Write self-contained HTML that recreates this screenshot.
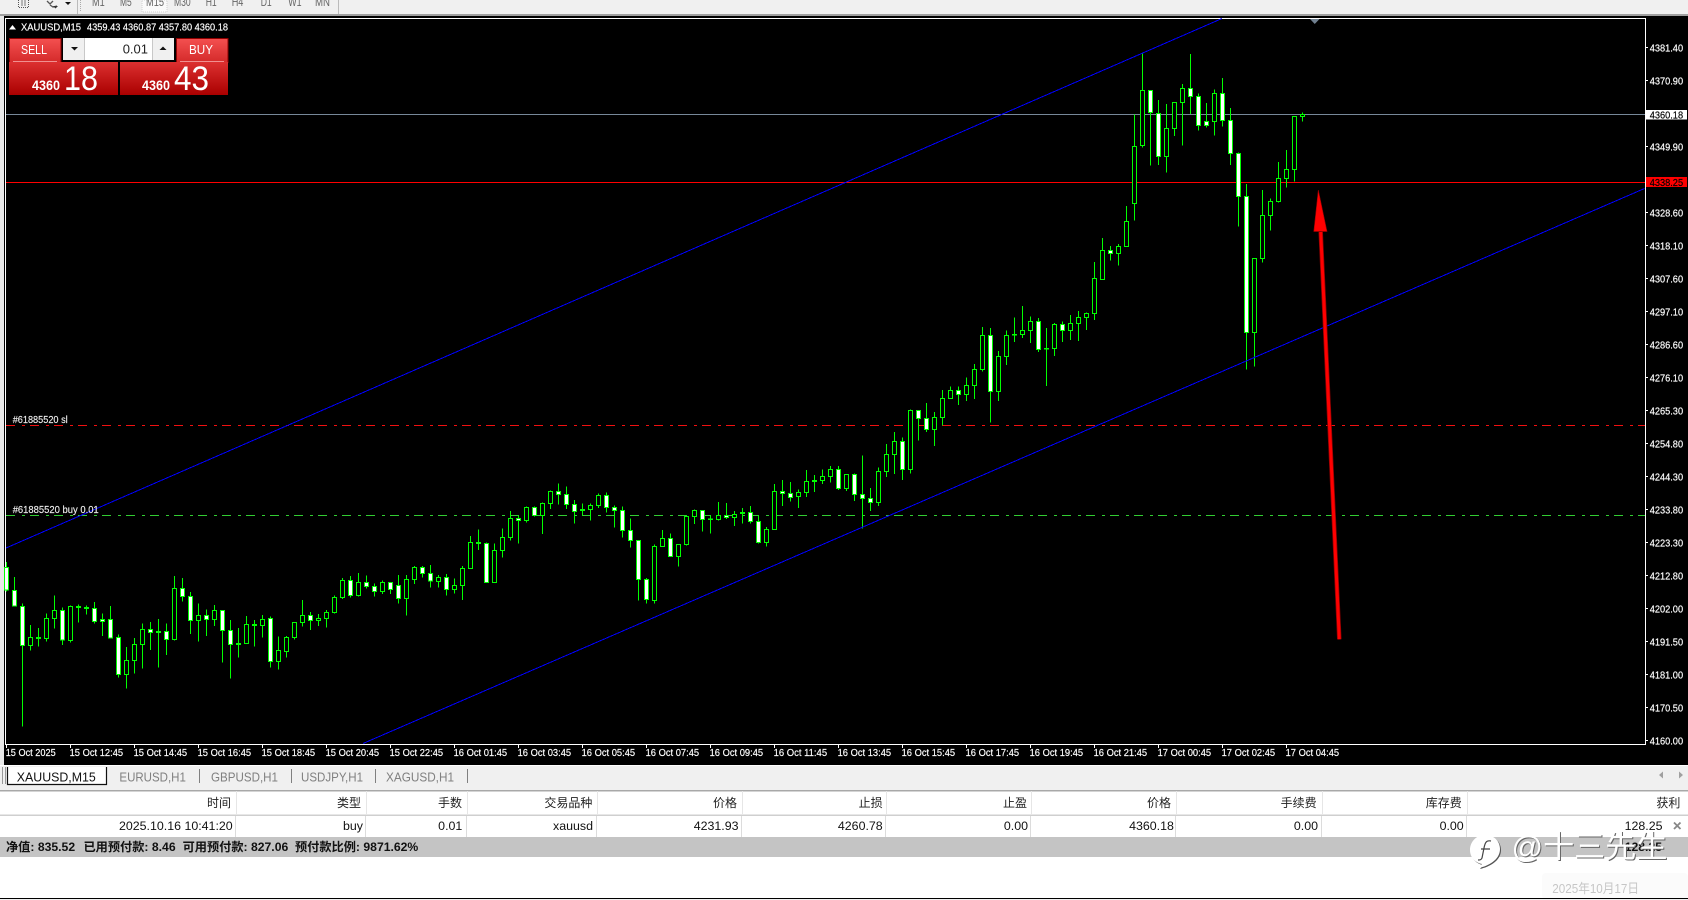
<!DOCTYPE html>
<html><head><meta charset="utf-8"><title>XAUUSD,M15</title>
<style>
html,body{margin:0;padding:0;background:#f0f0f0;width:1688px;height:900px;overflow:hidden}
svg{display:block;position:absolute;left:0;top:0}
text{font-family:"Liberation Sans","Noto Sans CJK SC",sans-serif;white-space:pre}
.p text{font-size:10.5px;fill:#fff;stroke:#fff;stroke-width:.18px}
.p text.k{fill:#000;stroke:#000}
.h text{font-size:12px;fill:#222;text-anchor:end}
.r text{font-size:12.4px;fill:#111;text-anchor:end}
.b text{font-size:12.2px;font-weight:bold;fill:#111}
.m text{font-size:12px;fill:#666}
.w{fill:none;stroke:#0f0;stroke-width:3}
.bw{fill:#fff;stroke:#0f0;stroke-width:3}
.bb{fill:#000;stroke:#0f0;stroke-width:3}
</style></head><body>
<svg width="1688" height="900" viewBox="0 0 1688 900" xmlns="http://www.w3.org/2000/svg">
<defs>
<linearGradient id="gs" x1="0" y1="0" x2="0" y2="1"><stop offset="0" stop-color="#f45050"/><stop offset="1" stop-color="#d42a2a"/></linearGradient>
<linearGradient id="gl" x1="0" y1="0" x2="0" y2="1"><stop offset="0" stop-color="#dc3030"/><stop offset="1" stop-color="#aa0000"/></linearGradient>
</defs>
<!-- toolbar -->
<rect width="1688" height="14" fill="#f0f0f0"/>
<rect y="14" width="1688" height="2" fill="#a0a0a0"/>
<rect y="16" width="4" height="750" fill="#e8e8e8"/>
<rect x="142" y="0" width="25" height="12" fill="#fafafa" stroke="#cfcfcf" stroke-dasharray="1 1"/>
<g fill="none" stroke="#555">
<path d="M18.5 0V7.5H28.5V0" stroke-dasharray="1 1"/><path d="M22 0V6M25 0V6" stroke="#777"/>
<path d="M47 1l3 3 3-3M50 5l3 2 4-1" stroke-width="1.3"/>
<path d="M77.5 0V14M338.5 0V14" stroke="#bbb"/><path d="M80.5 0V12" stroke="#aaa" stroke-dasharray="1 1"/>
</g>
<path d="M65 2h6l-3 3z" fill="#111"/><path d="M53 6h5l-2.500 2.500z" fill="#333"/>
<g class="m">
<text x="92" y="6" textLength="12.700" lengthAdjust="spacingAndGlyphs">M1</text>
<text x="120" y="6" textLength="11.700" lengthAdjust="spacingAndGlyphs">M5</text>
<text x="146" y="6" textLength="18" lengthAdjust="spacingAndGlyphs">M15</text>
<text x="174" y="6" textLength="16.700" lengthAdjust="spacingAndGlyphs">M30</text>
<text x="205.700" y="6" textLength="11" lengthAdjust="spacingAndGlyphs">H1</text>
<text x="231.700" y="6" textLength="11.700" lengthAdjust="spacingAndGlyphs">H4</text>
<text x="260.700" y="6" textLength="11" lengthAdjust="spacingAndGlyphs">D1</text>
<text x="288.300" y="6" textLength="13.300" lengthAdjust="spacingAndGlyphs">W1</text>
<text x="315" y="6" textLength="15" lengthAdjust="spacingAndGlyphs">MN</text>
</g>
<!-- chart bg -->
<rect x="4" y="16" width="1684" height="749" fill="#000"/>
<path d="M5.500 744V18.500H1645.500V744" fill="none" stroke="#fff"/>
<path d="M5 744.500H1646" stroke="#fff"/>
<rect x="0" y="765" width="1688" height="1" fill="#fff"/>
<!-- levels -->
<g shape-rendering="crispEdges">
<path d="M6 114.500H1645" stroke="#778899"/>
<path d="M6 182.500H1645" stroke="#f00"/>
<path d="M6 425.500H1645" stroke="#f01010" stroke-dasharray="9 7 3 5"/>
<path d="M6 515.500H1645" stroke="#32cd32" stroke-dasharray="9 7 3 5"/>
</g>
<!-- candles -->
<g shape-rendering="crispEdges">
<g transform="translate(0,400) scale(.33333)">
<path class="w" d="M19.5 486V575M43.5 531V620M67.5 610V980M91.5 675V752M115.5 684V740M139.5 640V725M163.5 586V686M187.5 622V735M211.5 617V728M235.5 613V668M259.5 616V644M283.5 606V670M307.5 640V708M331.5 618V716M355.5 703V833M379.5 741V866M403.5 714V821M427.5 670V806M451.5 666V750M475.5 657V803M499.5 670V765M523.5 528V722M547.5 534V605M571.5 576V702M595.5 610V725M619.5 628V708M643.5 615V678M667.5 632V788M691.5 660V836M715.5 684V773M739.5 648V731M763.5 660V740M787.5 645V713M811.5 650V803M835.5 709V809M859.5 708V773M883.5 667V718M907.5 600V680M931.5 636V690M955.5 642V678M979.5 630V683M1003.5 586V640M1027.5 534V597M1051.5 528V592M1075.5 519V590M1099.5 526V566M1123.5 550V590M1147.5 541V582M1171.5 547V582M1195.5 525V611M1219.5 525V647M1243.5 498V552M1267.5 498V533M1291.5 495V563M1315.5 525V563M1339.5 522V587M1363.5 535V581M1387.5 498V600M1411.5 408V506M1435.5 388V450M1459.5 427V548M1483.5 430V548M1507.5 385V473M1531.5 333V422M1555.5 346V431M1579.5 319V368M1603.5 320V350M1627.5 307V402M1651.5 271V327M1675.5 250V314M1699.5 259V327M1723.5 300V371M1747.5 310V347M1771.5 310V362M1795.5 280V324M1819.5 277V338M1843.5 316V383M1867.5 319V413M1891.5 355V443M1915.5 422V602M1939.5 534V611M1963.5 433V611M1987.5 390V441M2011.5 400V470M2035.5 434V500M2059.5 347V437M2083.5 328V372M2107.5 330V395M2131.5 347V401M2155.5 306V362M2179.5 309V357M2203.5 333V378M2227.5 324V371M2251.5 318V371M2275.5 347V430M2299.5 381V440M2323.5 252V389M2347.5 240V318M2371.5 246V305M2395.5 268V324M2419.5 210V291M2443.5 225V276M2467.5 208V252M2491.5 198V248M2515.5 198V270M2539.5 223V273M2563.5 220V303M2587.5 166V386M2611.5 264V333M2635.5 202V318M2659.5 132V231M2683.5 96V222M2707.5 112V240M2731.5 28V221"/>
<path class="bb" d="M85.5 712h12V736h-12zM133.5 655h12V716h-12zM157.5 632h12V655h-12zM205.5 619h12V721h-12zM373.5 782h12V823h-12zM397.5 734h12V781h-12zM421.5 689h12V733h-12zM517.5 566h12V718h-12zM589.5 647h12V661h-12zM637.5 632h12V659h-12zM733.5 674h12V730h-12zM781.5 658h12V677h-12zM829.5 752h12V785h-12zM853.5 712h12V754h-12zM877.5 668h12V713h-12zM901.5 646h12V668h-12zM949.5 656h12V661h-12zM973.5 637h12V655h-12zM997.5 593h12V637h-12zM1021.5 541h12V593h-12zM1069.5 547h12V586h-12zM1141.5 547h12V575h-12zM1213.5 539h12V596h-12zM1237.5 502h12V539h-12zM1309.5 532h12V544h-12zM1357.5 557h12V569h-12zM1381.5 505h12V557h-12zM1405.5 428h12V505h-12zM1477.5 452h12V547h-12zM1501.5 412h12V452h-12zM1525.5 355h12V413h-12zM1573.5 322h12V362h-12zM1621.5 310h12V347h-12zM1645.5 274h12V310h-12zM1765.5 316h12V329h-12zM1789.5 287h12V317h-12zM1957.5 439h12V601h-12zM1981.5 416h12V440h-12zM2029.5 434h12V470h-12zM2053.5 349h12V434h-12zM2077.5 332h12V350h-12zM2149.5 347h12V358h-12zM2197.5 343h12V352h-12zM2293.5 388h12V428h-12zM2317.5 274h12V388h-12zM2389.5 277h12V289h-12zM2413.5 245h12V277h-12zM2461.5 230h12V242h-12zM2485.5 208h12V230h-12zM2533.5 223h12V266h-12zM2629.5 214h12V307h-12zM2653.5 164h12V215h-12zM2677.5 125h12V164h-12zM2725.5 31h12V208h-12z"/>
<path class="bw" d="M13.5 503h12V570h-12zM37.5 572h12V618h-12zM61.5 620h12V736h-12zM181.5 632h12V720h-12zM277.5 626h12V664h-12zM301.5 658h12V664h-12zM325.5 659h12V714h-12zM349.5 713h12V823h-12zM445.5 689h12V697h-12zM493.5 695h12V718h-12zM541.5 566h12V589h-12zM565.5 590h12V661h-12zM613.5 647h12V658h-12zM661.5 632h12V691h-12zM685.5 692h12V733h-12zM805.5 655h12V785h-12zM925.5 647h12V661h-12zM1045.5 542h12V586h-12zM1093.5 548h12V559h-12zM1117.5 560h12V574h-12zM1165.5 548h12V568h-12zM1189.5 557h12V595h-12zM1261.5 503h12V520h-12zM1285.5 521h12V543h-12zM1333.5 533h12V568h-12zM1453.5 431h12V547h-12zM109.5 712h12V715h-12zM229.5 619h12V622h-12zM253.5 622h12V625h-12zM469.5 694h12V697h-12zM709.5 731h12V734h-12zM757.5 674h12V677h-12zM1429.5 427h12V430h-12zM1549.5 355h12V361h-12zM1597.5 322h12V346h-12zM1669.5 275h12V283h-12zM1693.5 284h12V313h-12zM1717.5 314h12V334h-12zM1813.5 287h12V322h-12zM1837.5 323h12V331h-12zM1861.5 332h12V391h-12zM1885.5 392h12V421h-12zM1909.5 422h12V538h-12zM1933.5 539h12V598h-12zM2005.5 416h12V469h-12zM2101.5 332h12V358h-12zM2173.5 347h12V353h-12zM2245.5 338h12V364h-12zM2269.5 365h12V428h-12zM2341.5 275h12V280h-12zM2365.5 281h12V292h-12zM2509.5 209h12V266h-12zM2557.5 224h12V283h-12zM2581.5 284h12V295h-12zM2605.5 296h12V307h-12zM2701.5 125h12V208h-12zM1741.5 329h12V331h-12zM2125.5 357h12V359h-12zM2221.5 338h12V340h-12zM2437.5 242h12V244h-12z"/>
</g>
<g transform="translate(0,220) scale(.33333)">
<path class="w" d="M2755.5 570V662M2779.5 549V636M2803.5 576V678M2827.5 510V616M2851.5 499V535M2875.5 499V555M2899.5 472V543M2923.5 432V537M2947.5 321V455M2971.5 324V608M2995.5 393V543M3019.5 331V435M3043.5 292V366M3067.5 258V354M3091.5 289V369M3115.5 294V396M3139.5 324V498M3163.5 309V408M3187.5 304V366M3211.5 285V360M3235.5 273V363M3259.5 277V330M3283.5 126V300"/>
<path class="bb" d="M2797.5 592h12V628h-12zM2821.5 535h12V593h-12zM2845.5 511h12V535h-12zM2893.5 496h12V524h-12zM2917.5 448h12V496h-12zM2941.5 346h12V448h-12zM2989.5 409h12V515h-12zM3013.5 346h12V410h-12zM3061.5 331h12V344h-12zM3085.5 304h12V332h-12zM3157.5 313h12V386h-12zM3205.5 310h12V331h-12zM3229.5 292h12V311h-12zM3253.5 280h12V292h-12zM3277.5 175h12V280h-12z"/>
<path class="bw" d="M2749.5 572h12V596h-12zM2773.5 595h12V628h-12zM2869.5 512h12V524h-12zM2965.5 346h12V515h-12zM3109.5 304h12V388h-12zM3181.5 314h12V331h-12zM3037.5 343h12V345h-12zM3133.5 385h12V387h-12z"/>
</g>
<g transform="scale(.33333)">
<path class="w" d="M3307.5 714V835M3331.5 738V782M3355.5 732V797M3379.5 618V740M3403.5 343V662M3427.5 158V443M3451.5 271V497M3475.5 300V495M3499.5 312V518M3523.5 307V408M3547.5 252V437M3571.5 162V342M3595.5 280V392M3619.5 309V383M3643.5 268V407M3667.5 234V380M3691.5 324V495M3715.5 457V680M3739.5 552V1108M3763.5 775V1100M3787.5 570V788M3811.5 595V692M3835.5 486V607M3859.5 450V563M3883.5 348V545M3907.5 337V365"/>
<path class="bb" d="M3301.5 751h12V838h-12zM3349.5 740h12V760h-12zM3373.5 665h12V740h-12zM3397.5 440h12V610h-12zM3421.5 271h12V437h-12zM3493.5 385h12V470h-12zM3517.5 308h12V385h-12zM3541.5 265h12V308h-12zM3637.5 281h12V364h-12zM3757.5 775h12V997h-12zM3781.5 647h12V775h-12zM3805.5 605h12V646h-12zM3829.5 536h12V605h-12zM3853.5 509h12V536h-12zM3877.5 349h12V509h-12zM3901.5 343h12V349h-12z"/>
<path class="bw" d="M3325.5 752h12V760h-12zM3445.5 272h12V337h-12zM3469.5 341h12V469h-12zM3565.5 266h12V289h-12zM3589.5 289h12V376h-12zM3613.5 364h12V376h-12zM3661.5 281h12V361h-12zM3685.5 362h12V460h-12zM3709.5 461h12V590h-12zM3733.5 590h12V997h-12z"/>
</g>
</g>
<!-- channel -->
<g stroke="#00f" stroke-width="1" shape-rendering="crispEdges">
<path d="M6 548L1222 18.500"/>
<path d="M363 743.500L1644.500 188.500"/>
</g>
<!-- marker triangle -->
<path d="M1310 19h9.500l-4.750 5z" fill="#708090"/>
<!-- arrow -->
<path d="M1320.700 232L1339.300 639.300" stroke="#8c0000" stroke-width="4.500"/>
<path d="M1320.700 232L1339.300 639.300" stroke="#f00" stroke-width="3"/>
<path d="M1318.300 190L1313.800 231.500H1327z" fill="#f00" stroke="#a00000" stroke-width=".6"/>
<!-- chart header -->
<path d="M9 29.500L12.500 25L16 29.500z" fill="#fff"/>
<text x="21" y="30.300" font-size="10.500" fill="#fff" stroke="#fff" stroke-width=".18" textLength="60" lengthAdjust="spacingAndGlyphs">XAUUSD,M15</text>
<text x="87" y="30.300" font-size="10.500" fill="#fff" stroke="#fff" stroke-width=".18" textLength="141" lengthAdjust="spacingAndGlyphs">4359.43 4360.87 4357.80 4360.18</text>
<!-- trade panel -->
<rect x="9.500" y="38.500" width="51.500" height="24" fill="url(#gs)" stroke="#900000"/>
<rect x="176.500" y="38.500" width="51.500" height="24" fill="url(#gs)" stroke="#900000"/>
<rect x="9" y="62" width="109" height="33" fill="url(#gl)"/>
<rect x="120" y="62" width="108" height="33" fill="url(#gl)"/>
<path d="M13 61.500H57M180 61.500H224" stroke="#f09090"/>
<rect x="63" y="38" width="111" height="22" fill="#fff"/>
<rect x="63" y="38" width="21" height="22" fill="#f0f0f0"/>
<rect x="153" y="38" width="21" height="22" fill="#f0f0f0"/>
<path d="M84.500 38V60M152.500 38V60" stroke="#c8c8c8"/>
<path d="M71 47h7l-3.500 3.500z" fill="#111"/><path d="M159.500 50h7l-3.500-3.500z" fill="#111"/>
<text x="34" y="54" font-size="13" fill="#fff" text-anchor="middle" textLength="26" lengthAdjust="spacingAndGlyphs">SELL</text>
<text x="201" y="54" font-size="13" fill="#fff" text-anchor="middle" textLength="24" lengthAdjust="spacingAndGlyphs">BUY</text>
<text x="148" y="53.500" font-size="13" fill="#222" text-anchor="end">0.01</text>
<text x="32" y="90" font-size="13.500" font-weight="bold" fill="#fff" textLength="28" lengthAdjust="spacingAndGlyphs">4360</text>
<text x="142" y="90" font-size="13.500" font-weight="bold" fill="#fff" textLength="28" lengthAdjust="spacingAndGlyphs">4360</text>
<text x="64" y="90" font-size="34" fill="#fff" textLength="34" lengthAdjust="spacingAndGlyphs">18</text>
<text x="174" y="90" font-size="34" fill="#fff" textLength="35" lengthAdjust="spacingAndGlyphs">43</text>
<!-- order labels -->
<text x="12.700" y="423" font-size="10.500" fill="#eee" stroke="#eee" stroke-width=".15" textLength="55" lengthAdjust="spacingAndGlyphs">#61885520 sl</text>
<text x="12.700" y="513" font-size="10.500" fill="#eee" stroke="#eee" stroke-width=".15" textLength="86" lengthAdjust="spacingAndGlyphs">#61885520 buy 0.01</text>
<!-- price axis -->
<path d="M1645 47.500h3M1645 80.500h3M1645 146.500h3M1645 212.500h3M1645 245.500h3M1645 278.500h3M1645 311.500h3M1645 344.500h3M1645 377.500h3M1645 410.500h3M1645 443.500h3M1645 476.500h3M1645 509.500h3M1645 542.500h3M1645 575.500h3M1645 608.500h3M1645 641.500h3M1645 674.500h3M1645 707.500h3M1645 740.500h3" stroke="#fff"/>
<rect x="1646" y="110" width="41" height="9.500" fill="#fff"/>
<rect x="1646" y="177" width="41" height="10" fill="#f00"/>
<g class="p">
<text x="1649.700" y="51.500" textLength="33.400" lengthAdjust="spacingAndGlyphs">4381.40</text>
<text x="1649.700" y="84.500" textLength="33.400" lengthAdjust="spacingAndGlyphs">4370.90</text>
<text class="k" x="1649.700" y="118.500" textLength="33.400" lengthAdjust="spacingAndGlyphs">4360.18</text>
<text x="1649.700" y="150.500" textLength="33.400" lengthAdjust="spacingAndGlyphs">4349.90</text>
<text class="k" x="1649.700" y="185.800" textLength="33.400" lengthAdjust="spacingAndGlyphs">4338.25</text>
<text x="1649.700" y="216.300" textLength="33.400" lengthAdjust="spacingAndGlyphs">4328.60</text>
<text x="1649.700" y="249.300" textLength="33.400" lengthAdjust="spacingAndGlyphs">4318.10</text>
<text x="1649.700" y="282.300" textLength="33.400" lengthAdjust="spacingAndGlyphs">4307.60</text>
<text x="1649.700" y="315.300" textLength="33.400" lengthAdjust="spacingAndGlyphs">4297.10</text>
<text x="1649.700" y="348.300" textLength="33.400" lengthAdjust="spacingAndGlyphs">4286.60</text>
<text x="1649.700" y="381.300" textLength="33.400" lengthAdjust="spacingAndGlyphs">4276.10</text>
<text x="1649.700" y="414.300" textLength="33.400" lengthAdjust="spacingAndGlyphs">4265.30</text>
<text x="1649.700" y="447.300" textLength="33.400" lengthAdjust="spacingAndGlyphs">4254.80</text>
<text x="1649.700" y="480.300" textLength="33.400" lengthAdjust="spacingAndGlyphs">4244.30</text>
<text x="1649.700" y="513.300" textLength="33.400" lengthAdjust="spacingAndGlyphs">4233.80</text>
<text x="1649.700" y="546.300" textLength="33.400" lengthAdjust="spacingAndGlyphs">4223.30</text>
<text x="1649.700" y="579.300" textLength="33.400" lengthAdjust="spacingAndGlyphs">4212.80</text>
<text x="1649.700" y="612.300" textLength="33.400" lengthAdjust="spacingAndGlyphs">4202.00</text>
<text x="1649.700" y="645.300" textLength="33.400" lengthAdjust="spacingAndGlyphs">4191.50</text>
<text x="1649.700" y="678.300" textLength="33.400" lengthAdjust="spacingAndGlyphs">4181.00</text>
<text x="1649.700" y="711.300" textLength="33.400" lengthAdjust="spacingAndGlyphs">4170.50</text>
<text x="1649.700" y="744.300" textLength="33.400" lengthAdjust="spacingAndGlyphs">4160.00</text>
</g>
<!-- time axis -->
<path d="M6.500 744v4M70.500 744v4M134.500 744v4M198.500 744v4M262.500 744v4M326.500 744v4M390.500 744v4M454.500 744v4M518.500 744v4M582.500 744v4M646.500 744v4M710.500 744v4M774.500 744v4M838.500 744v4M902.500 744v4M966.500 744v4M1030.500 744v4M1094.500 744v4M1158.500 744v4M1222.500 744v4M1286.500 744v4" stroke="#fff"/>
<g class="p">
<text x="5.700" y="756" textLength="50" lengthAdjust="spacingAndGlyphs">15 Oct 2025</text>
<text x="69.600" y="756" textLength="53.500" lengthAdjust="spacingAndGlyphs">15 Oct 12:45</text>
<text x="133.600" y="756" textLength="53.500" lengthAdjust="spacingAndGlyphs">15 Oct 14:45</text>
<text x="197.600" y="756" textLength="53.500" lengthAdjust="spacingAndGlyphs">15 Oct 16:45</text>
<text x="261.600" y="756" textLength="53.500" lengthAdjust="spacingAndGlyphs">15 Oct 18:45</text>
<text x="325.600" y="756" textLength="53.500" lengthAdjust="spacingAndGlyphs">15 Oct 20:45</text>
<text x="389.600" y="756" textLength="53.500" lengthAdjust="spacingAndGlyphs">15 Oct 22:45</text>
<text x="453.600" y="756" textLength="53.500" lengthAdjust="spacingAndGlyphs">16 Oct 01:45</text>
<text x="517.600" y="756" textLength="53.500" lengthAdjust="spacingAndGlyphs">16 Oct 03:45</text>
<text x="581.600" y="756" textLength="53.500" lengthAdjust="spacingAndGlyphs">16 Oct 05:45</text>
<text x="645.600" y="756" textLength="53.500" lengthAdjust="spacingAndGlyphs">16 Oct 07:45</text>
<text x="709.600" y="756" textLength="53.500" lengthAdjust="spacingAndGlyphs">16 Oct 09:45</text>
<text x="773.600" y="756" textLength="53.500" lengthAdjust="spacingAndGlyphs">16 Oct 11:45</text>
<text x="837.600" y="756" textLength="53.500" lengthAdjust="spacingAndGlyphs">16 Oct 13:45</text>
<text x="901.600" y="756" textLength="53.500" lengthAdjust="spacingAndGlyphs">16 Oct 15:45</text>
<text x="965.600" y="756" textLength="53.500" lengthAdjust="spacingAndGlyphs">16 Oct 17:45</text>
<text x="1029.600" y="756" textLength="53.500" lengthAdjust="spacingAndGlyphs">16 Oct 19:45</text>
<text x="1093.600" y="756" textLength="53.500" lengthAdjust="spacingAndGlyphs">16 Oct 21:45</text>
<text x="1157.600" y="756" textLength="53.500" lengthAdjust="spacingAndGlyphs">17 Oct 00:45</text>
<text x="1221.600" y="756" textLength="53.500" lengthAdjust="spacingAndGlyphs">17 Oct 02:45</text>
<text x="1285.600" y="756" textLength="53.500" lengthAdjust="spacingAndGlyphs">17 Oct 04:45</text>
</g>
<!-- tabs -->
<rect x="0" y="766" width="1688" height="24" fill="#f0f0f0"/>
<path d="M2.500 767V784M5.500 767V784" stroke="#999"/>
<path d="M7.500 767V784.500H106.500V767" fill="#fff" stroke="#111" stroke-width="1.200"/>
<text x="16.800" y="781.300" font-size="12.500" fill="#111" textLength="79" lengthAdjust="spacingAndGlyphs">XAUUSD,M15</text>
<g font-size="12.500" fill="#808080">
<text x="119.400" y="781.300" textLength="66.500" lengthAdjust="spacingAndGlyphs">EURUSD,H1</text>
<text x="211" y="781.300" textLength="67" lengthAdjust="spacingAndGlyphs">GBPUSD,H1</text>
<text x="301" y="781.300" textLength="62" lengthAdjust="spacingAndGlyphs">USDJPY,H1</text>
<text x="386" y="781.300" textLength="68" lengthAdjust="spacingAndGlyphs">XAGUSD,H1</text>
</g>
<path d="M199.500 769V783M291.500 769V783M375.500 769V783M467.500 769V783" stroke="#808080"/>
<path d="M1663 771.500v7l-4-3.500zM1679 771.500v7l4-3.500z" fill="#a0a0a0"/>
<!-- table -->
<rect x="0" y="790" width="1688" height="108" fill="#fff"/>
<rect x="0" y="790" width="1688" height="1.500" fill="#a8a8a8"/>
<rect x="0" y="814.500" width="1688" height="1.500" fill="#cfcfcf"/>
<path d="M236.500 791V815M366.500 791V815M467.500 791V815M597.500 791V815M742.500 791V815M886.500 791V815M1031.500 791V815M1176.500 791V815M1322.500 791V815M1467.500 791V815" stroke="#e6e6e6"/>
<path d="M235.500 816V837M365.500 816V837M466.500 816V837M596.500 816V837M741.500 816V837M885.500 816V837M1030.500 816V837M1175.500 816V837M1321.500 816V837M1466.500 816V837" stroke="#dcdcdc"/>
<g class="h">
<text x="231" y="807">时间</text><text x="361" y="807">类型</text><text x="462" y="807">手数</text><text x="592.400" y="807">交易品种</text><text x="737" y="807">价格</text><text x="882.700" y="807">止损</text><text x="1027" y="807">止盈</text><text x="1171" y="807">价格</text><text x="1316.700" y="807">手续费</text><text x="1461.800" y="807">库存费</text><text x="1680.400" y="807">获利</text>
</g>
<g class="r">
<text x="232.700" y="830">2025.10.16 10:41:20</text><text x="363" y="830">buy</text><text x="462.300" y="830">0.01</text><text x="593" y="830">xauusd</text><text x="738.500" y="830">4231.93</text><text x="882.700" y="830">4260.78</text><text x="1028" y="830">0.00</text><text x="1173.900" y="830">4360.18</text><text x="1318" y="830">0.00</text><text x="1463.700" y="830">0.00</text><text x="1662.500" y="830">128.25</text>
</g>
<path d="M1674 822.500l6.500 6.500M1680.500 822.500l-6.500 6.500" stroke="#888" stroke-width="1.800"/>
<rect x="0" y="837" width="1688" height="20" fill="#c4c4c4"/>
<g class="b">
<text x="6" y="851">净值: 835.52</text>
<text x="83.500" y="851">已用预付款: 8.46</text>
<text x="182.600" y="851">可用预付款: 827.06</text>
<text x="295" y="851">预付款比例: 9871.62%</text>
<text x="1662" y="851" text-anchor="end">128.25</text>
</g>
<!-- date box and bottom line -->
<rect x="1542" y="873" width="146" height="26" rx="4" fill="#fbfbfb"/>
<rect x="0" y="898" width="1688" height="1" fill="#000"/>
<text x="1552.300" y="893" font-size="13" fill="#c6c6c6" textLength="86.700" lengthAdjust="spacingAndGlyphs">2025年10月17日</text>
<!-- watermark -->
<path d="M1486 836C1477 836 1471 843 1471 851C1471 859 1477 864 1483 865L1480 869C1489 867 1501 861 1501 850C1501 842 1495 836 1486 836Z" fill="#555"/>
<path d="M1485 835C1476 835 1470 842 1470 850C1470 858 1476 863 1482 864L1479 868C1488 866 1500 860 1500 849C1500 841 1494 835 1485 835Z" fill="#fff"/>
<path d="M1491 841C1486 840 1485 843 1484 848L1482 858C1481 860 1480 860 1478 860M1481 849H1490" fill="none" stroke="#444" stroke-width="1.200"/>
<g font-size="31">
<text x="1512.500" y="858.500" fill="#666" textLength="156" lengthAdjust="spacingAndGlyphs">@十三先生</text>
<text x="1511.500" y="857.500" fill="#fff" textLength="156" lengthAdjust="spacingAndGlyphs">@十三先生</text>
</g>
</svg>
</body></html>
